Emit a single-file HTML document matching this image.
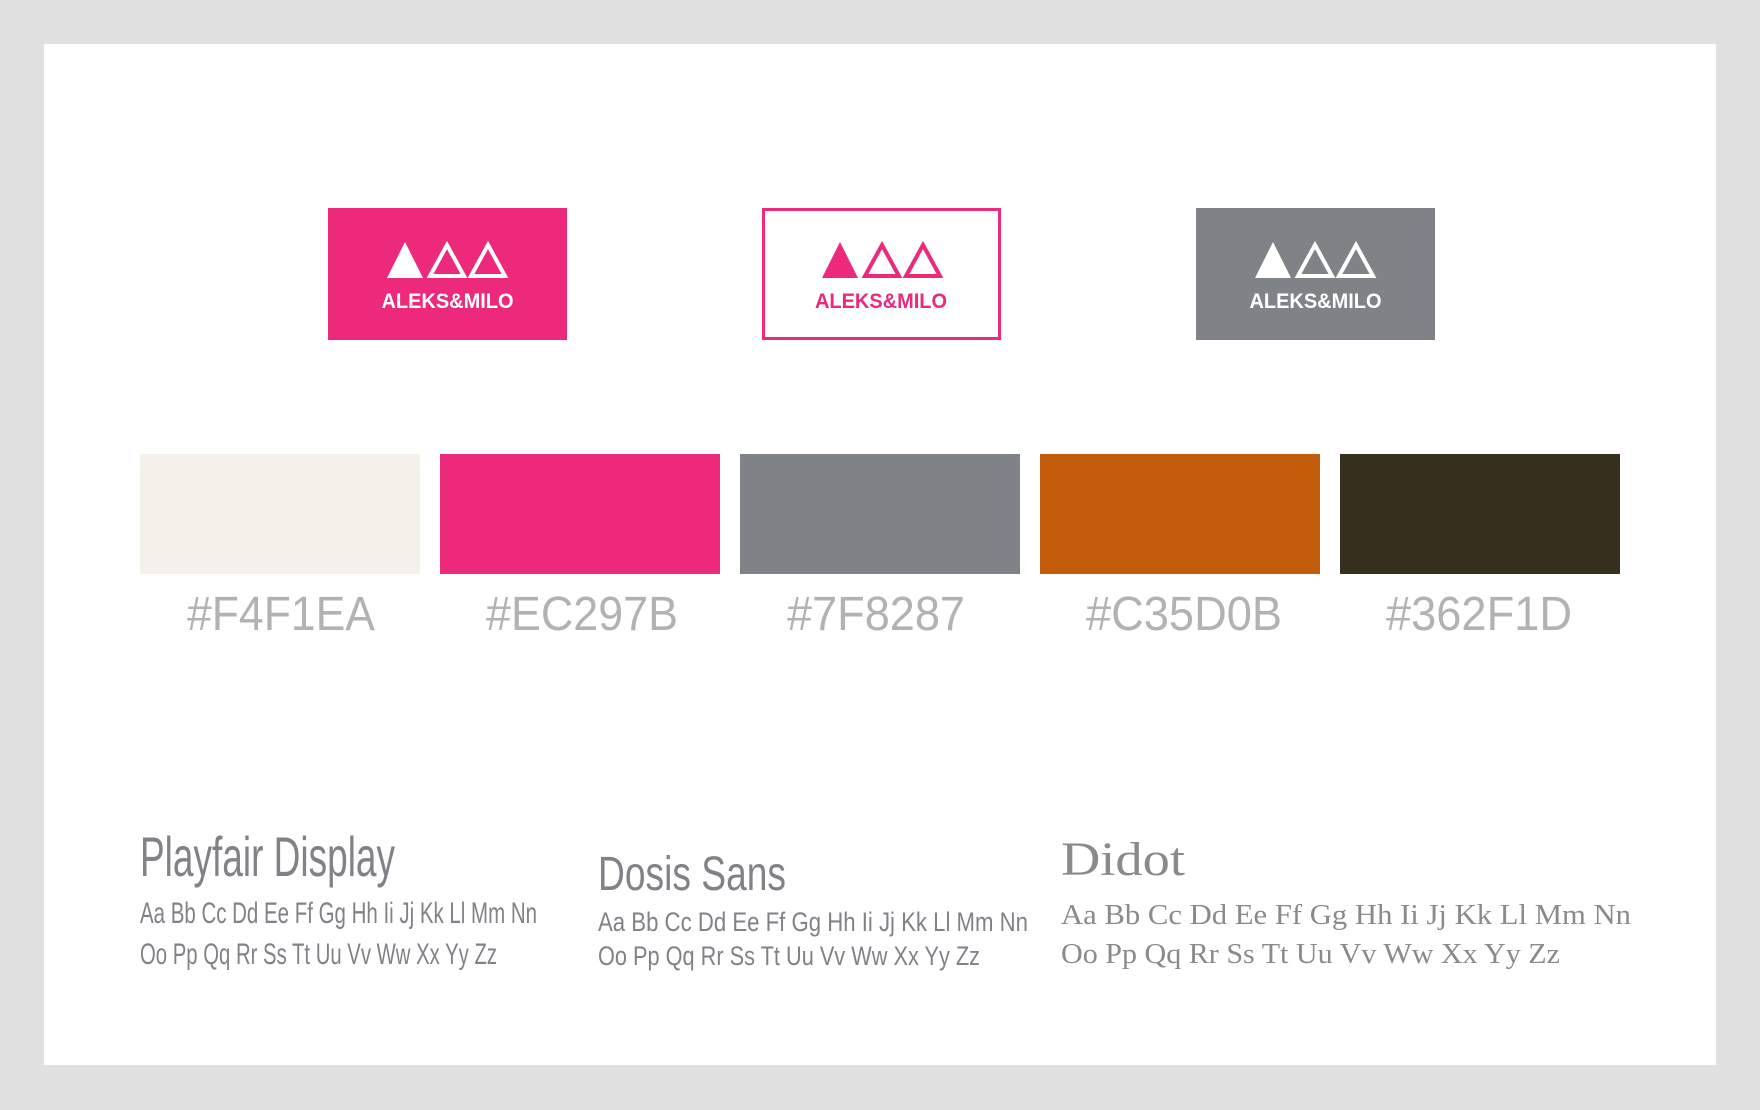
<!DOCTYPE html>
<html><head><meta charset="utf-8"><style>html,body{margin:0;padding:0;background:#e1e1e1}svg{display:block}</style></head><body>
<svg width="1760" height="1110" viewBox="0 0 1760 1110" xmlns="http://www.w3.org/2000/svg">
<rect width="1760" height="1110" fill="#e1e1e1"/>
<rect x="44" y="44" width="1672" height="1021" fill="#fff"/>
<!-- logo 1 -->
<rect x="328" y="208" width="239" height="132" fill="#ec297b"/>
<g fill="#fff"><polygon points="387,278 405,242 423,278"/></g>
<g fill="none" stroke="#fff" stroke-width="4">
<polygon points="430,276 447,245 464,276"/>
<polygon points="471,276 488,245 505,276"/>
</g>
<text x="447.5" y="308" text-anchor="middle" font-family="Liberation Sans, sans-serif" font-weight="bold" font-size="21" fill="#fff" textLength="132" lengthAdjust="spacingAndGlyphs">ALEKS&amp;MILO</text>
<!-- logo 2 -->
<rect x="763.5" y="209.5" width="236" height="129" fill="#fff" stroke="#ec297b" stroke-width="3"/>
<g fill="#ec297b"><polygon points="822,278 840,242 858,278"/></g>
<g fill="none" stroke="#ec297b" stroke-width="4">
<polygon points="865,276 882,245 899,276"/>
<polygon points="906,276 923,245 940,276"/>
</g>
<text x="881" y="308" text-anchor="middle" font-family="Liberation Sans, sans-serif" font-weight="bold" font-size="21" fill="#ec297b" textLength="132" lengthAdjust="spacingAndGlyphs">ALEKS&amp;MILO</text>
<!-- logo 3 -->
<rect x="1196" y="208" width="239" height="132" fill="#7f8287"/>
<g fill="#fff"><polygon points="1255,278 1273,242 1291,278"/></g>
<g fill="none" stroke="#fff" stroke-width="4">
<polygon points="1298,276 1315,245 1332,276"/>
<polygon points="1339,276 1356,245 1373,276"/>
</g>
<text x="1315.5" y="308" text-anchor="middle" font-family="Liberation Sans, sans-serif" font-weight="bold" font-size="21" fill="#fff" textLength="132" lengthAdjust="spacingAndGlyphs">ALEKS&amp;MILO</text>
<!-- swatches -->
<rect x="140" y="454" width="280" height="120" fill="#f4f1ea"/>
<rect x="440" y="454" width="280" height="120" fill="#ec297b"/>
<rect x="740" y="454" width="280" height="120" fill="#7f8287"/>
<rect x="1040" y="454" width="280" height="120" fill="#c35d0b"/>
<rect x="1340" y="454" width="280" height="120" fill="#362f1d"/>
<g font-family="Liberation Sans, sans-serif" font-size="48" fill="#b2b2b2" text-anchor="middle">
<text x="281" y="630" textLength="188" lengthAdjust="spacingAndGlyphs">#F4F1EA</text>
<text x="582" y="630" textLength="192" lengthAdjust="spacingAndGlyphs">#EC297B</text>
<text x="876" y="630" textLength="178" lengthAdjust="spacingAndGlyphs">#7F8287</text>
<text x="1184" y="630" textLength="196" lengthAdjust="spacingAndGlyphs">#C35D0B</text>
<text x="1479" y="630" textLength="186" lengthAdjust="spacingAndGlyphs">#362F1D</text>
</g>
<!-- typography -->
<g font-family="Liberation Sans, sans-serif" fill="#808288">
<text x="140" y="876" font-size="56" textLength="255" lengthAdjust="spacingAndGlyphs">Playfair Display</text>
<text x="140" y="923" font-size="30" textLength="397" lengthAdjust="spacingAndGlyphs">Aa Bb Cc Dd Ee Ff Gg Hh Ii Jj Kk Ll Mm Nn</text>
<text x="140" y="964" font-size="30" textLength="357" lengthAdjust="spacingAndGlyphs">Oo Pp Qq Rr Ss Tt Uu Vv Ww Xx Yy Zz</text>
<text x="598" y="890" font-size="48" textLength="188" lengthAdjust="spacingAndGlyphs">Dosis Sans</text>
<text x="598" y="931" font-size="27" textLength="430" lengthAdjust="spacingAndGlyphs">Aa Bb Cc Dd Ee Ff Gg Hh Ii Jj Kk Ll Mm Nn</text>
<text x="598" y="965" font-size="27" textLength="382" lengthAdjust="spacingAndGlyphs">Oo Pp Qq Rr Ss Tt Uu Vv Ww Xx Yy Zz</text>
</g>
<g font-family="Liberation Serif, serif" fill="#8a8a8a">
<text x="1061" y="875" font-size="48" textLength="124" lengthAdjust="spacingAndGlyphs">Didot</text>
<text x="1061" y="924" font-size="29" textLength="570" lengthAdjust="spacingAndGlyphs">Aa Bb Cc Dd Ee Ff Gg Hh Ii Jj Kk Ll Mm Nn</text>
<text x="1061" y="963" font-size="29" textLength="499" lengthAdjust="spacingAndGlyphs">Oo Pp Qq Rr Ss Tt Uu Vv Ww Xx Yy Zz</text>
</g>
</svg>
</body></html>
